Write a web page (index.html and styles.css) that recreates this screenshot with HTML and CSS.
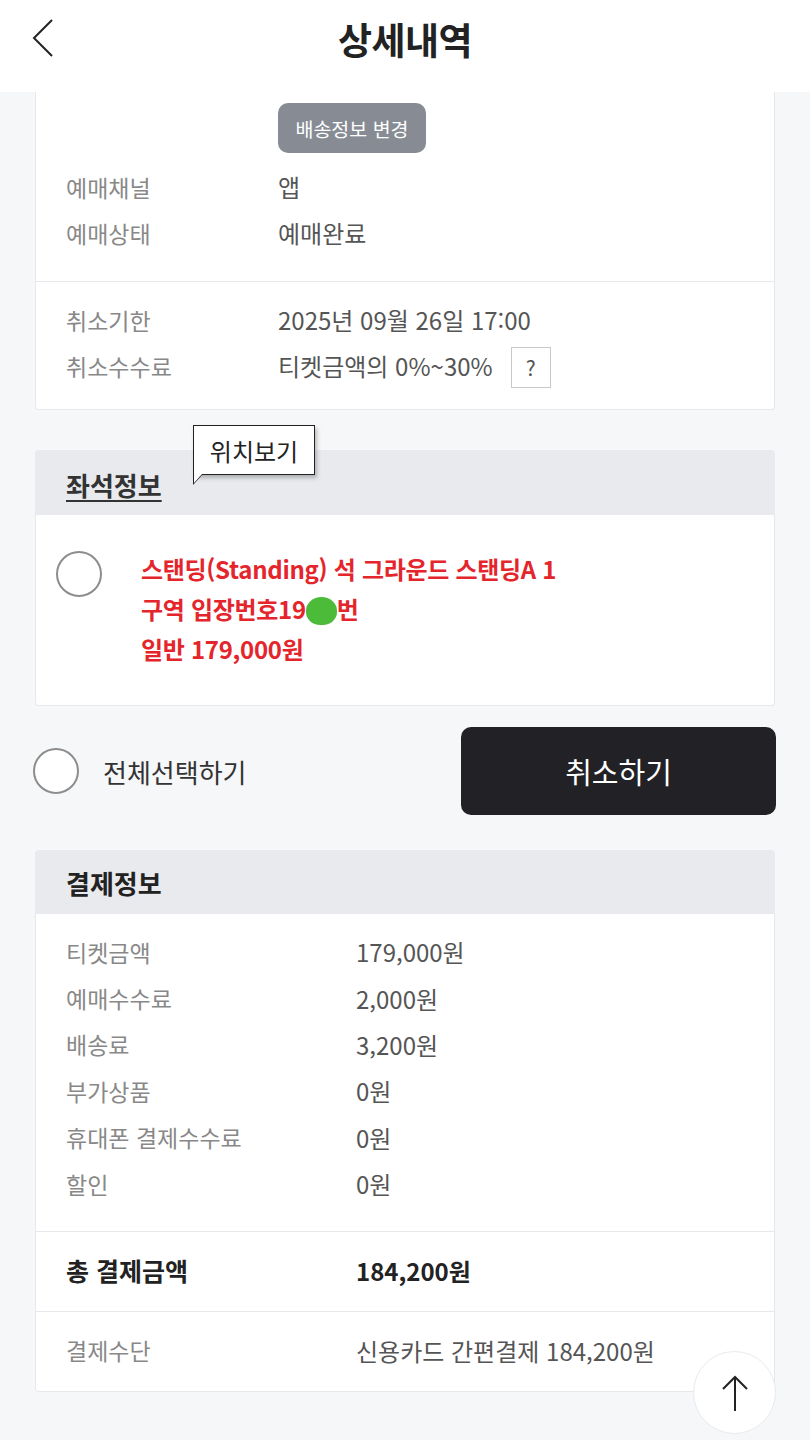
FILE: index.html
```html
<!DOCTYPE html>
<html lang="ko">
<head>
    <meta charset="UTF-8">
    <title>상세내역</title>
    <link rel="stylesheet" href="styles.css">
</head>
<body>

    <header class="topbar">
        <a class="back" href="#">
            <svg width="24" height="40" viewBox="0 0 24 40">
                <path d="M21 2 L3 20 L21 38" fill="none" stroke="#222" stroke-width="2"/>
            </svg>
        </a>
        <h1 class="title">상세내역</h1>
    </header>

    <main class="page">

        <section class="card card-top">
            <div class="block block-first">
                <div class="row">
                    <span class="label"></span>
                    <span class="value"><button class="gray-button">배송정보 변경</button></span>
                </div>
                <div class="row">
                    <span class="label">예매채널</span>
                    <span class="value">앱</span>
                </div>
                <div class="row">
                    <span class="label">예매상태</span>
                    <span class="value">예매완료</span>
                </div>
            </div>
            <div class="block block-cancel">
                <div class="row">
                    <span class="label">취소기한</span>
                    <span class="value">2025년 09월 26일 17:00</span>
                </div>
                <div class="row">
                    <span class="label">취소수수료</span>
                    <span class="value">티켓금액의 0%~30% <span class="help">?</span></span>
                </div>
            </div>
        </section>

        <section class="seat">
            <div class="box-head">
                <h2 class="box-title underline">좌석정보</h2>
                <div class="tip">위치보기</div>
            </div>
            <div class="seat-body">
                <span class="radio"></span>
                <p class="seat-text">
                    스탠딩(Standing) 석 그라운드 스탠딩A 1<br>
                    구역 입장번호19<span class="mask"></span>번<br>
                    일반 179,000원
                </p>
            </div>
        </section>

        <div class="select-bar">
            <label class="select-all">
                <span class="radio"></span>
                전체선택하기
            </label>
            <button class="cancel-button">취소하기</button>
        </div>

        <section class="card pay">
            <div class="box-head">
                <h2 class="box-title">결제정보</h2>
            </div>
            <div class="block pay-list">
                <div class="row"><span class="label">티켓금액</span><span class="value">179,000원</span></div>
                <div class="row"><span class="label">예매수수료</span><span class="value">2,000원</span></div>
                <div class="row"><span class="label">배송료</span><span class="value">3,200원</span></div>
                <div class="row"><span class="label">부가상품</span><span class="value">0원</span></div>
                <div class="row"><span class="label">휴대폰 결제수수료</span><span class="value">0원</span></div>
                <div class="row"><span class="label">할인</span><span class="value">0원</span></div>
            </div>
            <div class="block pay-total">
                <div class="row"><span class="label">총 결제금액</span><span class="value">184,200원</span></div>
            </div>
            <div class="block pay-method">
                <div class="row"><span class="label">결제수단</span><span class="value">신용카드 간편결제 184,200원</span></div>
            </div>
        </section>

    </main>

    <a class="to-top" href="#">
        <svg width="40" height="40" viewBox="0 0 40 40">
            <path d="M20 38 V4 M8 16 L20 4 L32 16" fill="none" stroke="#222" stroke-width="2"/>
        </svg>
    </a>

</body>
</html>
```

FILE: styles.css
```css
* {
    margin: 0;
    padding: 0;
    box-sizing: border-box;
}

body {
    font-family: "Noto Sans CJK KR", "Noto Sans", sans-serif;
    background-color: #f6f7f9;
    color: #333;
    height: 1440px;
    overflow: hidden;
}

.topbar {
    height: 92px;
    background-color: #fff;
    display: flex;
    align-items: center;
    justify-content: center;
    position: relative;
}

    .topbar .back {
        position: absolute;
        left: 31px;
        top: 18px;
        display: block;
    }

    .topbar .title {
        font-size: 37px;
        font-weight: 700;
        color: #222;
        letter-spacing: -0.5px;
        margin-top: -14px;
    }

.page {
    padding: 0 35px;
}

.card {
    background-color: #fff;
    border: 1px solid #e7e8eb;
    border-radius: 4px;
}

.card-top {
    border-top: none;
    border-radius: 0 0 4px 4px;
}

.block {
    padding: 0 30px;
}

.row {
    display: flex;
    align-items: center;
    height: 46px;
    padding-bottom: 3px;
    font-size: 23px;
}

    .row .label {
        width: 212px;
        flex-shrink: 0;
        color: #888;
    }

    .row .value {
        color: #555;
        font-size: 24px;
        display: flex;
        align-items: center;
    }

.block-first {
    padding-top: 11px;
    padding-bottom: 24px;
}

    .block-first .row:first-child {
        height: 50px;
        padding-bottom: 0;
        margin-bottom: 12px;
    }

.gray-button {
    width: 148px;
    height: 50px;
    border: none;
    border-radius: 10px;
    background-color: #878c94;
    color: #fff;
    font-family: inherit;
    font-size: 19.5px;
}

.block-cancel {
    border-top: 1px solid #e7e8eb;
    padding-top: 16px;
    padding-bottom: 19px;
}

.help {
    display: inline-flex;
    align-items: center;
    justify-content: center;
    width: 40px;
    height: 41px;
    margin-left: 18px;
    margin-top: 3px;
    border: 1px solid #c9c9c9;
    font-size: 21px;
    color: #555;
}

.seat {
    margin-top: 40px;
}

.box-head {
    position: relative;
    height: 65px;
    background-color: #e9eaee;
    border-radius: 4px 4px 0 0;
    padding: 0 31px;
    display: flex;
    align-items: center;
}

.box-title {
    font-size: 26px;
    font-weight: 700;
    color: #222;
}

    .box-title.underline {
        text-decoration: underline;
        text-underline-offset: 4px;
        text-decoration-thickness: 2px;
        color: #333;
        margin-top: 4px;
    }

.tip {
    position: absolute;
    left: 158px;
    top: -25px;
    width: 122px;
    height: 50px;
    background-color: #fff;
    border: 1px solid #222;
    box-shadow: 2px 3px 4px rgba(0, 0, 0, 0.25);
    font-size: 24px;
    color: #222;
    display: flex;
    align-items: center;
    justify-content: center;
}

    .tip::before,
    .tip::after {
        content: "";
        position: absolute;
        top: 100%;
        clip-path: polygon(0 0, 100% 0, 0 100%);
    }

    .tip::before {
        left: -1px;
        width: 10px;
        height: 11px;
        background-color: #222;
    }

    .tip::after {
        left: 0;
        width: 8px;
        height: 9px;
        background-color: #fff;
    }

.seat-body {
    background-color: #fff;
    border: 1px solid #e7e8eb;
    border-top: none;
    border-radius: 0 0 4px 4px;
    height: 191px;
    display: flex;
    align-items: flex-start;
    padding: 34px 20px 0;
}

.radio {
    display: inline-block;
    width: 46px;
    height: 46px;
    border: 2px solid #8d8d8d;
    border-radius: 50%;
    background-color: #fff;
    flex-shrink: 0;
}

.seat-body .radio {
    margin-top: 2px;
}

.seat-text {
    margin-left: 39px;
    font-size: 24px;
    font-weight: 700;
    line-height: 40px;
    color: #e5252c;
    letter-spacing: -0.3px;
}

.mask {
    display: inline-block;
    width: 31px;
    height: 28px;
    vertical-align: -6px;
    background-color: #4dbb3a;
    border-radius: 50% 50% 46% 46%;
}

.select-bar {
    margin-top: 21px;
    display: flex;
    align-items: center;
    justify-content: space-between;
}

.select-all {
    display: flex;
    align-items: center;
    margin-left: -2px;
    font-size: 26px;
    color: #333;
}

    .select-all .radio {
        margin-right: 24px;
    }

.cancel-button {
    width: 315px;
    height: 88px;
    border: none;
    border-radius: 10px;
    background-color: #222226;
    color: #fff;
    font-family: inherit;
    font-size: 29px;
    margin-right: -1px;
}

.pay {
    margin-top: 35px;
    border: none;
}

    .pay .box-head {
        height: 64px;
    }

    .pay .block {
        border: 1px solid #e7e8eb;
        border-top: none;
    }

    .pay .row .label {
        width: 290px;
    }

.pay-list {
    padding-top: 16px;
    padding-bottom: 23px;
}

    .pay-list .row {
        height: 46.4px;
    }

.pay-total .row {
    height: 79px;
}

    .pay-total .row .label,
    .pay-total .row .value {
        color: #222;
        font-weight: 700;
    }

    .pay-total .row .label {
        font-size: 25px;
    }

.pay-method {
    border-radius: 0 0 4px 4px;
}

    .pay-method .row {
        height: 79px;
    }

.to-top {
    position: fixed;
    right: 34px;
    bottom: 6px;
    width: 83px;
    height: 83px;
    border-radius: 50%;
    background-color: #fff;
    border: 1px solid #e8e9ec;
    display: flex;
    align-items: center;
    justify-content: center;
}
```
